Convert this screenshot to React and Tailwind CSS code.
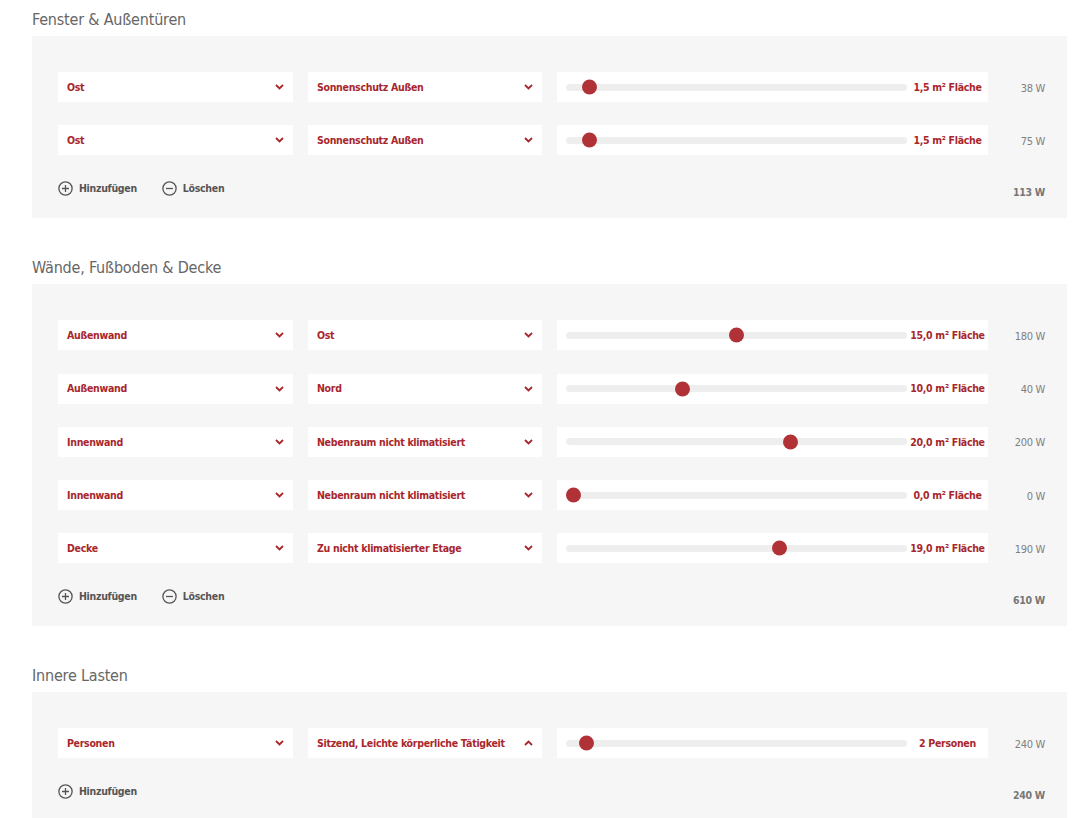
import React from "react";

const RED = "text-[#a8262c]";
const SMALL = "text-[10.5px] font-bold leading-none tracking-[-0.3px] whitespace-nowrap";

function Chevron({ up }) {
  return (
    <svg width="9" height="6" viewBox="0 0 9 6" className="shrink-0">
      <path
        d={up ? "M1 5 L4.5 1.5 L8 5" : "M1 1 L4.5 4.5 L8 1"}
        fill="none"
        stroke="#a8262c"
        strokeWidth="1.8"
      />
    </svg>
  );
}

function Select({ label, up, w }) {
  return (
    <div className={`${w} h-[30px] bg-white flex items-center justify-between pl-[9px] pr-[9px] shrink-0`}>
      <span className={`${RED} ${SMALL}`}>{label}</span>
      <Chevron up={up} />
    </div>
  );
}

function Slider({ value, max, label }) {
  const pct = value / max;
  return (
    <div className="w-[431px] h-[30px] bg-white flex items-center pl-[9px] shrink-0">
      <div className="relative flex-1 h-[7px] rounded-full bg-[#eeeeee]">
        <div
          className="absolute top-1/2 w-[15px] h-[15px] rounded-full bg-[#b03236] -translate-y-1/2"
          style={{ left: `calc(${pct} * (100% - 15px))` }}
        />
      </div>
      <div className="w-[81px] flex justify-center shrink-0">
        <span className={`${RED} ${SMALL}`}>{label}</span>
      </div>
    </div>
  );
}

function Row({ a, b, up, value, max, label, watts }) {
  return (
    <div className="flex items-center">
      <Select label={a} w="w-[235px]" />
      <div className="w-[15px] shrink-0" />
      <Select label={b} up={up} w="w-[234px]" />
      <div className="w-[15px] shrink-0" />
      <Slider value={value} max={max} label={label} />
      <div className="w-[57px] text-right text-[11px] text-[#808080] leading-none tracking-[-0.3px] pt-[2px]">{watts}</div>
    </div>
  );
}

function PlusIcon() {
  return (
    <svg width="15" height="15" viewBox="0 0 15 15">
      <circle cx="7.5" cy="7.5" r="6.6" fill="none" stroke="#555" strokeWidth="1.3" />
      <path d="M7.5 4 V11 M4 7.5 H11" stroke="#555" strokeWidth="1.3" />
    </svg>
  );
}
function MinusIcon() {
  return (
    <svg width="15" height="15" viewBox="0 0 15 15">
      <circle cx="7.5" cy="7.5" r="6.6" fill="none" stroke="#555" strokeWidth="1.3" />
      <path d="M4 7.5 H11" stroke="#555" strokeWidth="1.3" />
    </svg>
  );
}

function Section({ title, rows, total, noDelete, last }) {
  return (
    <div className={last ? "" : "mb-[30px]"}>
      <div className="h-[36px] flex items-center pt-[4px] pl-[32px] text-[16px] text-[#666] leading-none tracking-[-0.2px]">
        {title}
      </div>
      <div className="ml-[32px] w-[1035px] bg-[#f6f6f6] pt-[36px] pb-[20px] pl-[26px] pr-[22px]">
        <div className="flex flex-col gap-[23.3px]">
          {rows.map((r, i) => (
            <Row key={i} {...r} />
          ))}
        </div>
        <div className="mt-[23px] h-[20px] flex items-end justify-between">
          <div className="flex items-center h-[20px] text-[10.5px] font-bold text-[#555] leading-none tracking-[-0.3px]">
            <div className="flex items-center gap-[6px]">
              <PlusIcon />
              <span>Hinzufügen</span>
            </div>
            {!noDelete && (
              <div className="flex items-center gap-[6px] ml-[25px]">
                <MinusIcon />
                <span>Löschen</span>
              </div>
            )}
          </div>
          <div className="text-[10.5px] font-bold text-[#777] leading-none tracking-[-0.3px] pb-[1px]">{total}</div>
        </div>
      </div>
    </div>
  );
}

export default function App() {
  return (
    <div
      className="w-[1080px] h-[818px] overflow-hidden bg-white"
      style={{ fontFamily: '"DejaVu Sans Condensed", "Liberation Sans", sans-serif' }}
    >
      <Section
        title="Fenster & Außentüren"
        total="113 W"
        rows={[
          { a: "Ost", b: "Sonnenschutz Außen", value: 1.5, max: 30, label: "1,5 m² Fläche", watts: "38 W" },
          { a: "Ost", b: "Sonnenschutz Außen", value: 1.5, max: 30, label: "1,5 m² Fläche", watts: "75 W" },
        ]}
      />
      <Section
        title="Wände, Fußboden & Decke"
        total="610 W"
        rows={[
          { a: "Außenwand", b: "Ost", value: 15, max: 30, label: "15,0 m² Fläche", watts: "180 W" },
          { a: "Außenwand", b: "Nord", value: 10, max: 30, label: "10,0 m² Fläche", watts: "40 W" },
          { a: "Innenwand", b: "Nebenraum nicht klimatisiert", value: 20, max: 30, label: "20,0 m² Fläche", watts: "200 W" },
          { a: "Innenwand", b: "Nebenraum nicht klimatisiert", value: 0, max: 30, label: "0,0 m² Fläche", watts: "0 W" },
          { a: "Decke", b: "Zu nicht klimatisierter Etage", value: 19, max: 30, label: "19,0 m² Fläche", watts: "190 W" },
        ]}
      />
      <Section
        title="Innere Lasten"
        total="240 W"
        noDelete
        last
        rows={[
          { a: "Personen", b: "Sitzend, Leichte körperliche Tätigkeit", up: true, value: 2, max: 50, label: "2 Personen", watts: "240 W" },
        ]}
      />
    </div>
  );
}
